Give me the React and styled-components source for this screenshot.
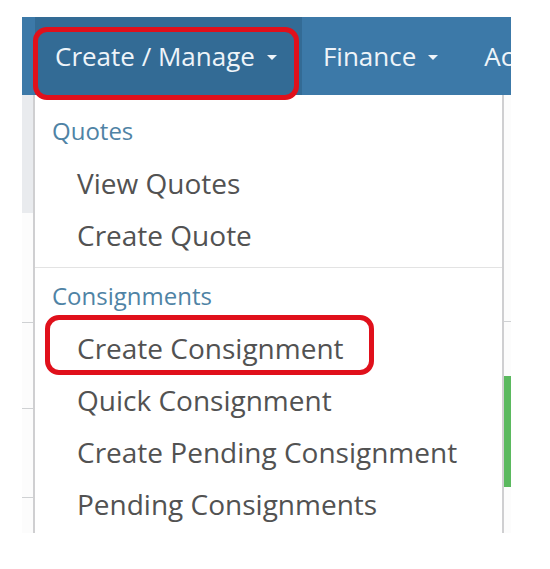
import styled, { createGlobalStyle } from "styled-components";

const GlobalStyle = createGlobalStyle`
  html, body {
    margin: 0;
    padding: 0;
    background: #ffffff;
  }
  body {
    font-family: "Open Sans", "Liberation Sans", sans-serif;
  }
`;

const Page = styled.div`
  padding: 17px 0 0 22px;
  height: 569px;
  box-sizing: border-box;
`;

const Frame = styled.div`
  position: relative;
  width: 489px;
`;

const NavBar = styled.div`
  display: flex;
  align-items: stretch;
  height: 78px;
  padding-left: 13px;
  background: #3c79a8;
  overflow: hidden;
`;

const NavItem = styled.div`
  display: flex;
  align-items: center;
  flex: 0 0 auto;
  padding: 0 25px 0 ${(p) => (p.$active ? 20 : 21)}px;
  font-size: 26px;
  color: #eef4f9;
  white-space: nowrap;
  background: ${(p) => (p.$active ? "#336b95" : "transparent")};
`;

const Caret = styled.span`
  display: inline-block;
  margin-left: 12px;
  margin-top: 3px;
  width: 0;
  height: 0;
  border-top: 5px solid #eef4f9;
  border-left: 5px solid transparent;
  border-right: 5px solid transparent;
`;

const Body = styled.div`
  display: flex;
  height: 438px;
`;

const Gutter = styled.div`
  display: flex;
  flex-direction: column;
  flex: 0 0 ${(p) => p.$w}px;
  background: #fcfcfc;
`;

const GutterRow = styled.div`
  flex: 0 0 ${(p) => p.$h}px;
  background: ${(p) => (p.$shade ? "#e9ebee" : "transparent")};
  border-bottom: ${(p) => (p.$line ? "1px solid #cfd1d3" : "none")};
`;

const Stripe = styled.div`
  flex: 0 0 111px;
  margin-top: 54px;
  background: #5bb95f;
`;

const Menu = styled.div`
  flex: 1 1 auto;
  display: flex;
  flex-direction: column;
  padding-top: 10px;
  background: #ffffff;
  border-left: 2px solid #cfcfd1;
  border-right: 2px solid #cfcfd1;
  overflow: hidden;
`;

const Header = styled.div`
  height: 52px;
  line-height: 52px;
  padding-left: 17px;
  font-size: 24px;
  color: #4f83a5;
`;

const Item = styled.div`
  height: 52px;
  line-height: 52px;
  padding-left: 42px;
  font-size: 28px;
  color: #525252;
  white-space: nowrap;
`;

const Divider = styled.div`
  height: 1px;
  margin: 6px 0 2px;
  background: #e3e3e3;
`;

const Highlight = styled.div`
  position: absolute;
  left: ${(p) => p.$x}px;
  top: ${(p) => p.$y}px;
  width: ${(p) => p.$w}px;
  height: ${(p) => p.$h}px;
  box-sizing: border-box;
  border: 5px solid #e0101b;
  border-radius: 14px;
  pointer-events: none;
`;

const sections = [
  { title: "Quotes", items: ["View Quotes", "Create Quote"] },
  {
    title: "Consignments",
    items: [
      "Create Consignment",
      "Quick Consignment",
      "Create Pending Consignment",
      "Pending Consignments",
    ],
  },
];

export default function App() {
  return (
    <>
      <GlobalStyle />
      <Page>
        <Frame>
          <NavBar>
            <NavItem $active>
              Create / Manage
              <Caret />
            </NavItem>
            <NavItem>
              Finance
              <Caret />
            </NavItem>
            <NavItem>Accounts</NavItem>
          </NavBar>
          <Body>
            <Gutter $w={11}>
              <GutterRow $h={118} $shade />
              <GutterRow $h={109} $line />
              <GutterRow $h={85} $line />
              <GutterRow $h={88} $line />
            </Gutter>
            <Menu>
              {sections.map((s, i) => (
                <div key={s.title}>
                  {i > 0 && <Divider />}
                  <Header>{s.title}</Header>
                  {s.items.map((it) => (
                    <Item key={it}>{it}</Item>
                  ))}
                </div>
              ))}
            </Menu>
            <Gutter $w={7}>
              <GutterRow $h={226} $line />
              <Stripe />
            </Gutter>
          </Body>
          <Highlight $x={11} $y={10} $w={266} $h={73} />
          <Highlight $x={23} $y={298} $w={329} $h={60} />
        </Frame>
      </Page>
    </>
  );
}
